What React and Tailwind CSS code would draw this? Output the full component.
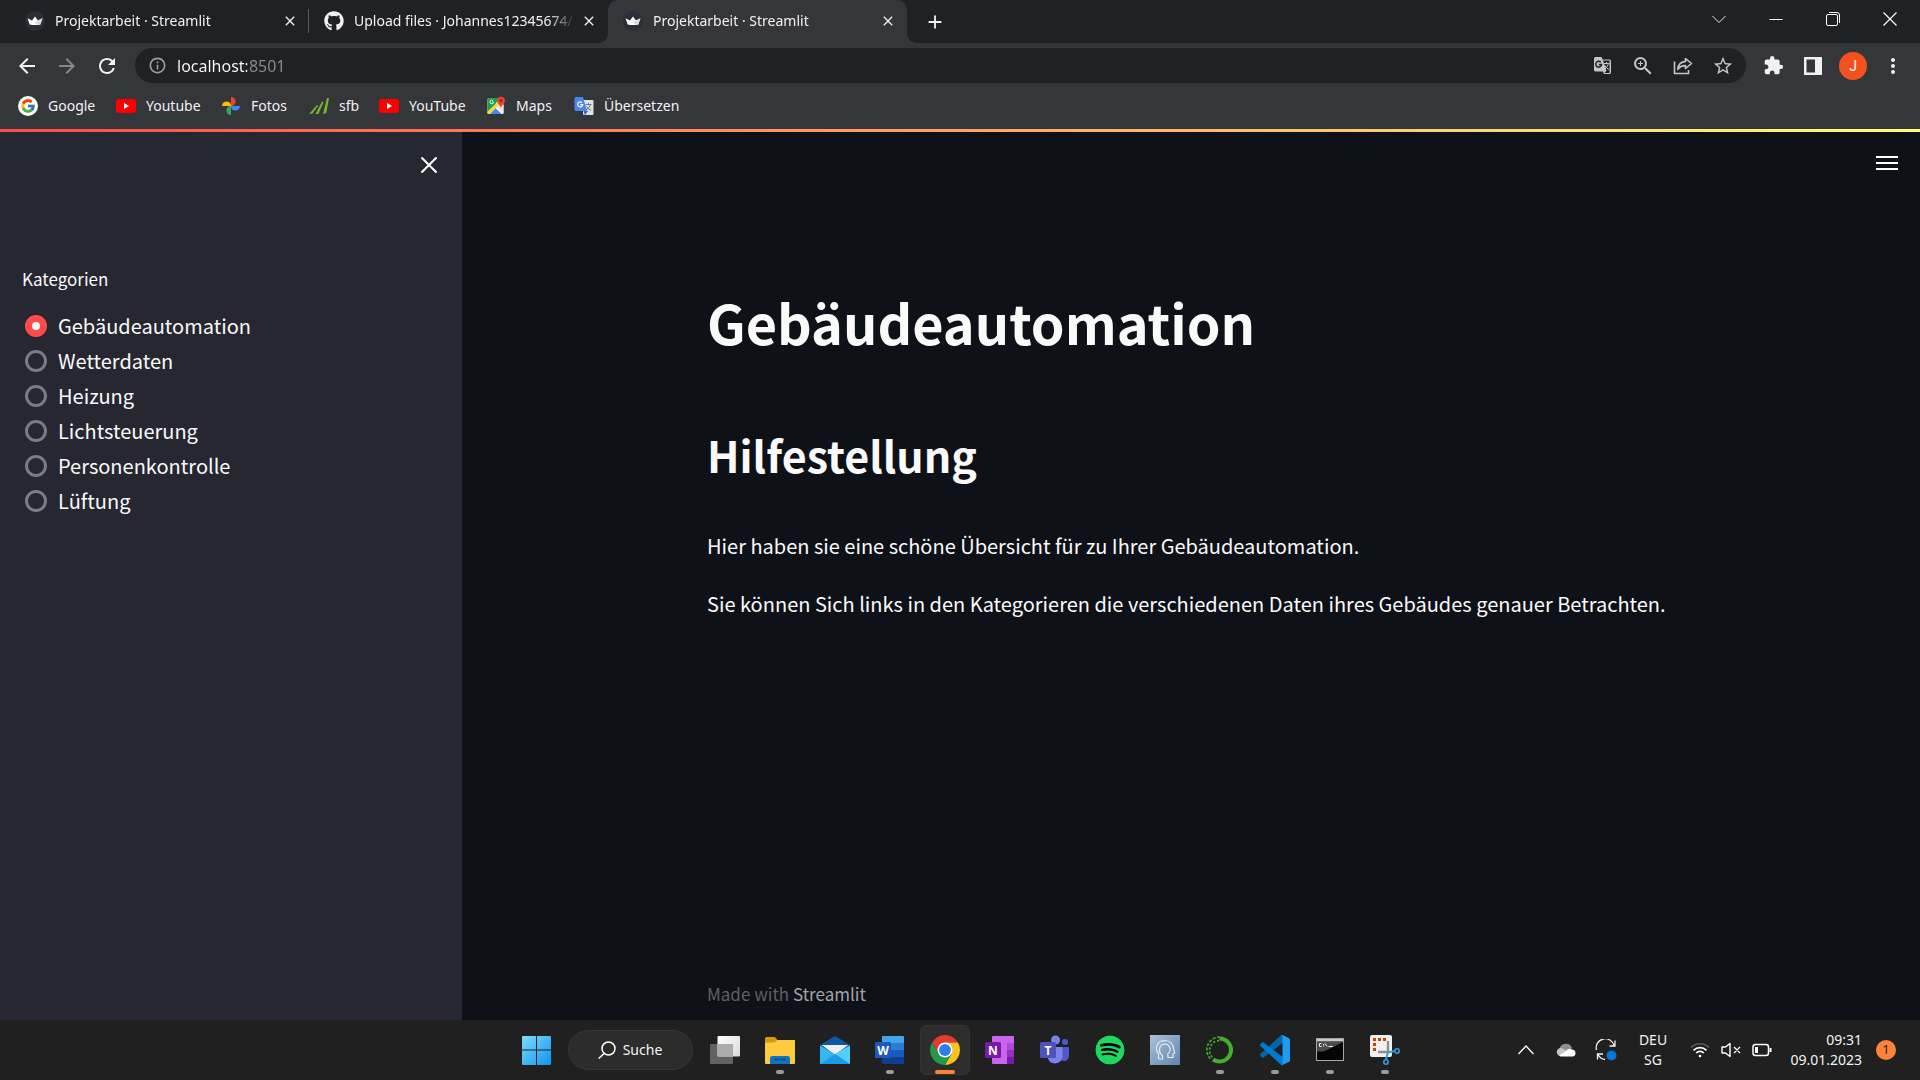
import React, { useState } from "react";
import { FaGithub, FaSpotify } from "react-icons/fa";
import { FcGoogle } from "react-icons/fc";
import {
  MdArrowBack,
  MdArrowForward,
  MdRefresh,
  MdInfoOutline,
  MdZoomIn,
  MdStarBorder,
  MdExtension,
  MdMoreVert,
  MdClose,
  MdAdd,
} from "react-icons/md";

/* ---------- Browser icons ---------- */

function Crown() {
  return (
    <svg viewBox="0 0 20 20" className="size-5 shrink-0">
      <circle cx="10" cy="10" r="10" fill="#2b2d38" />
      <path d="M2.500 7.300 7 9.600 10 5.600 13 9.600 17.500 7.300 15.300 13.400Q10 14.800 4.700 13.400Z" fill="#fff" />
      <path d="M10 11.200 13 9.600 17.500 7.300 15.300 13.400 12.400 14Z" fill="#d9dade" />
    </svg>
  );
}

function YouTubeIcon() {
  return (
    <svg viewBox="0 0 20 20" className="size-5 shrink-0">
      <rect x="0" y="3" width="20" height="14" rx="3" fill="#f00" />
      <path d="M8 7v6l5-3z" fill="#fff" />
    </svg>
  );
}

function GoogleIcon() {
  return (
    <span className="flex size-5 shrink-0 items-center justify-center rounded-full bg-white">
      <FcGoogle className="size-4" />
    </span>
  );
}

function PhotosIcon() {
  return (
    <svg viewBox="0 0 20 20" className="size-5 shrink-0">
      <path d="M10 1a4.600 4.600 0 0 1 0 9.200z" fill="#ea4335" />
      <path d="M19 10a4.600 4.600 0 0 1-9.200 0z" fill="#4285f4" />
      <path d="M10 19a4.600 4.600 0 0 1 0-9.200z" fill="#34a853" />
      <path d="M1 10a4.600 4.600 0 0 1 9.200 0z" fill="#fbbc04" />
    </svg>
  );
}

function SfbIcon() {
  return (
    <svg viewBox="0 0 20 20" className="size-5 shrink-0" fill="#76b82a">
      <path d="M0 18 8 9l1.400.6L3.400 17.400z" />
      <path d="M6.500 18 13 5.500l1.600.6L9.400 18z" />
      <path d="M14 18 18 2h2l-2.700 15z" />
    </svg>
  );
}

function MapsIcon() {
  return (
    <svg viewBox="0 0 20 20" className="size-5 shrink-0">
      <rect x="1.500" y="2" width="16" height="16" rx="1.500" fill="#fbfbfb" />
      <path d="M1.500 3.500A1.500 1.500 0 0 1 3 2h10L8.500 10 1.500 16z" fill="#1e9e58" />
      <path d="M1.500 15.500 12 5.500l2.200 2.300L4 18H3a1.500 1.500 0 0 1-1.500-1.500z" fill="#fdd835" />
      <path d="M4 18 9.700 12.200 15.500 18z" fill="#4285f4" />
      <path d="m11 11 6.500 6.500V9L14 8z" fill="#e3e5e8" />
      <path d="M7 4.700a1.800 1.800 0 1 0 .5 1.500H6" stroke="#fff" strokeWidth=".9" fill="none" />
      <path d="M15 .8a3.900 3.900 0 0 1 3.900 3.900c0 2.800-2.900 3.800-3.900 7.300-1-3.500-3.900-4.500-3.900-7.300A3.900 3.900 0 0 1 15 .8z" fill="#e5423a" />
      <circle cx="15" cy="4.600" r="1.400" fill="#8c1d18" />
    </svg>
  );
}

function TranslateIcon() {
  return (
    <svg viewBox="0 0 20 20" className="size-5 shrink-0">
      <rect x="9" y="4" width="10.500" height="15" rx="1" fill="#dfe1e5" />
      <path d="M11.500 8.500h6M14.500 7v1.500M16.300 8.500q-.8 4-4.300 5.500M12.500 10.500q1.500 3 4.500 3.700" stroke="#70757a" fill="none" />
      <path d="M2 1h7l4 14H2a1.500 1.500 0 0 1-1.500-1.500v-11A1.500 1.500 0 0 1 2 1z" fill="#4a86ee" />
      <path d="m9.500 15 1.500 4.200 3-4.200z" fill="#3367d6" />
      <path d="M8 6.600a2.500 2.500 0 1 0 .7 2H6.300" stroke="#fff" strokeWidth="1.200" fill="none" />
    </svg>
  );
}

function TranslateMono() {
  return (
    <svg viewBox="0 0 20 20" className="size-5" fill="none">
      <path d="M2.500 1h6l1 2.500h7A1.500 1.500 0 0 1 18 5v11.500a1.500 1.500 0 0 1-1.500 1.500H11l-1-2.500H2.500A1.500 1.500 0 0 1 1 14V2.500A1.500 1.500 0 0 1 2.500 1z" fill="#c4c5c8" />
      <path d="M10 4.500h6.500V17H11.500l2-2.500z" fill="#202124" />
      <path d="M10.500 7.500h6M13.500 6v1.500M15.500 7.500q-.7 3-3.300 5M11.500 9q1.300 2.700 4.300 4.500" stroke="#c4c5c8" />
      <path d="M7.800 6.200a2.900 2.900 0 1 0 .8 2.200H5.800" stroke="#202124" strokeWidth="1.500" />
    </svg>
  );
}

function ShareIcon() {
  return (
    <svg viewBox="0 0 20 20" className="size-5" fill="none" stroke="#c4c5c8" strokeWidth="1.600">
      <path d="M1.500 5.500v12h14V14" />
      <path d="M12.500 2.500 18.500 7.500l-6 5V9.600Q7.500 9.500 4.800 13.300 5.500 6 12.500 5.400z" strokeLinejoin="round" />
    </svg>
  );
}

function SidePanelIcon() {
  return (
    <svg viewBox="0 0 18 18" className="size-[18px]">
      <rect width="18" height="18" fill="#f1f1f4" />
      <rect x="2.500" y="2.500" width="8.500" height="13" fill="#35363a" />
    </svg>
  );
}

/* ---------- Taskbar icons ---------- */

function WindowsLogo() {
  return (
    <svg viewBox="0 0 30 30" className="size-[30px]">
      <defs>
        <linearGradient id="win" x1="0" y1="0" x2="1" y2="1" gradientUnits="objectBoundingBox">
          <stop offset="0" stopColor="#7fdcfb" />
          <stop offset="1" stopColor="#0e93ee" />
        </linearGradient>
      </defs>
      <path d="M2 1h13v13.500H1V2a1 1 0 0 1 1-1zM16 1h13a1 1 0 0 1 1 1v12.500H16zM1 15.500h14V30H2a1 1 0 0 1-1-1zM16 15.500h14V29a1 1 0 0 1-1 1H16z" fill="url(#win)" />
    </svg>
  );
}

function TaskViewIcon() {
  return (
    <svg viewBox="0 0 30 30" className="size-[30px]">
      <defs>
        <linearGradient id="tv" x1="0" y1="0" x2="1" y2="1">
          <stop offset="0" stopColor="#fff" />
          <stop offset="1" stopColor="#d9d9d9" />
        </linearGradient>
      </defs>
      <rect x="0" y="9" width="23" height="20" rx="1" fill="#626262" />
      <rect x="7.500" y="1" width="22.500" height="20.500" rx="1" fill="url(#tv)" />
      <path d="M7.500 9H23v12.500H7.500z" fill="#acacac" />
    </svg>
  );
}

function ExplorerIcon() {
  return (
    <svg viewBox="0 0 30 30" className="size-[30px]">
      <path d="M0 3.500A1.500 1.500 0 0 1 1.500 2h8.300L12.500 5H29a1 1 0 0 1 1 1v8H0z" fill="#d99a0b" />
      <path d="M0 7.500h9.500L12.500 5H29A1 1 0 0 1 30 6V28a1 1 0 0 1-1 1H1a1 1 0 0 1-1-1z" fill="#fdcb3f" />
      <path d="M5 29v-5.500A2.500 2.500 0 0 1 7.500 21h15a2.500 2.500 0 0 1 2.500 2.500V29z" fill="#0f74bd" />
      <path d="M9 24.500h12" stroke="#0a4f86" strokeWidth="1.500" />
    </svg>
  );
}

function MailIcon() {
  return (
    <svg viewBox="0 0 30 30" className="size-[30px]">
      <path d="M0 10 15 1l15 9v4H0z" fill="#0c59a4" />
      <path d="M2 10h26L15 20z" fill="#f3f3f3" />
      <path d="M0 10.500 15 19 30 10.500V29H0z" fill="#35b8f1" />
      <path d="M30 10.500V29L15 19z" fill="#50d0fb" />
      <path d="M0 29 15 19l15 10z" fill="#1c9be6" />
      <path d="M2 10h26l-13 9z" fill="#efefef" />
    </svg>
  );
}

function OfficeTile({ letter, back, front }) {
  return (
    <svg viewBox="0 0 30 30" className="size-[30px]">
      {back}
      <rect x="0" y="7" width="16" height="16" rx="1.500" fill={front} />
      <text x="8" y="19.500" textAnchor="middle" fontSize="12" fontWeight="700" fontFamily="Open Sans, sans-serif" fill="#fff">
        {letter}
      </text>
    </svg>
  );
}

const WordIcon = () => (
  <OfficeTile
    letter="W"
    front="#185abd"
    back={
      <g>
        <path d="M7 2a1 1 0 0 1 1-1h20a1 1 0 0 1 1 1v6H7z" fill="#41a5ee" />
        <path d="M7 8h22v7H7z" fill="#2b7cd3" />
        <path d="M7 15h22v7H7z" fill="#185abd" />
        <path d="M7 22h22v6a1 1 0 0 1-1 1H8a1 1 0 0 1-1-1z" fill="#103f91" />
      </g>
    }
  />
);

const OneNoteIcon = () => (
  <OfficeTile
    letter="N"
    front="#7719aa"
    back={
      <g>
        <rect x="7" y="1" width="22" height="28" rx="1" fill="#ca64ea" />
        <path d="M22 8h7v7h-7z" fill="#ae4bd5" />
        <path d="M22 15h7v7h-7z" fill="#9332bf" />
        <path d="M22 22h7v6a1 1 0 0 1-1 1h-6z" fill="#7719aa" />
      </g>
    }
  />
);

const TeamsIcon = () => (
  <OfficeTile
    letter="T"
    front="#4b53bc"
    back={
      <g>
        <circle cx="25" cy="7" r="3" fill="#5059c9" />
        <path d="M19 12h10v9a5 5 0 0 1-8 4z" fill="#5059c9" />
        <circle cx="15.500" cy="5" r="4.500" fill="#7b83eb" />
        <path d="M8 12h14.500v9.500a7.500 7.500 0 0 1-14.500 2z" fill="#7b83eb" />
      </g>
    }
  />
);

function ChromeIcon() {
  return (
    <svg viewBox="0 0 48 48" className="size-[30px]">
      <path d="M24 12h20.780A24 24 0 0 0 3.220 12l10.390 18z" fill="#e33b2e" />
      <path d="M34.390 30 24 48A24 24 0 0 0 44.780 12H24z" fill="#fcc31e" />
      <path d="M13.610 30 3.220 12A24 24 0 0 0 24 48l10.390-18z" fill="#249a49" />
      <circle cx="24" cy="24" r="12" fill="#fff" />
      <circle cx="24" cy="24" r="9.500" fill="#2f7de9" />
    </svg>
  );
}

function HeadIcon() {
  return (
    <svg viewBox="0 0 30 30" className="size-[30px]">
      <defs>
        <linearGradient id="head" x1="0" y1="0" x2="1" y2="1">
          <stop offset="0" stopColor="#a9c3da" />
          <stop offset="1" stopColor="#5f84aa" />
        </linearGradient>
      </defs>
      <rect width="30" height="30" fill="url(#head)" />
      <g fill="none" stroke="#e4edf5" strokeWidth="1.200">
        <path d="M8.500 24v-5.500C5 15 5.500 6 14.500 5.500c6 0 9 4 9 8.500l1.200 4-1.700.8v3.700h-5V20" />
        <path d="M8.500 24h4v-3.500c-4.500-3-4-11 2-11.500 6.500 0 7.500 8 2.500 10.500" />
      </g>
    </svg>
  );
}

function AnacondaIcon() {
  return (
    <svg viewBox="0 0 30 30" className="size-[30px]" fill="none">
      <path d="M14.500 3.500A11.500 11.500 0 1 1 8 24.500" stroke="#43b02a" strokeWidth="4" />
      <path d="M15 2A13 13 0 0 0 6 24.500" stroke="#43b02a" strokeWidth="1.600" strokeDasharray="3 1.500" />
      <path d="M14 5.500A10 10 0 0 0 8 23" stroke="#43b02a" strokeWidth="1.800" strokeDasharray="2 2" />
    </svg>
  );
}

function VsCodeIcon() {
  return (
    <svg viewBox="0 0 100 100" className="size-[30px]">
      <path d="M96.500 10.600 75.900.7a6.200 6.200 0 0 0-7.100 1.200L1.300 63.500a4.200 4.200 0 0 0 0 6.100l5.500 5a4.200 4.200 0 0 0 5.300.3L93.400 13.100A4.100 4.100 0 0 1 100 16.400v-.2a6.200 6.200 0 0 0-3.500-5.600z" fill="#0065a9" />
      <path d="m96.500 89.400-20.600 9.900a6.200 6.200 0 0 1-7.100-1.200L1.300 36.500a4.200 4.200 0 0 1 0-6.100l5.500-5a4.200 4.200 0 0 1 5.300-.3l81.300 61.800a4.100 4.100 0 0 0 6.600-3.300v.2a6.200 6.200 0 0 1-3.500 5.600z" fill="#007acc" />
      <path d="M75.900 99.300a6.200 6.200 0 0 1-7.100-1.200 3.700 3.700 0 0 0 6.200-2.600V4.500a3.700 3.700 0 0 0-6.200-2.600 6.200 6.200 0 0 1 7.100-1.200l20.600 9.900A6.200 6.200 0 0 1 100 16.200v67.600a6.200 6.200 0 0 1-3.500 5.600z" fill="#1f9cf0" />
    </svg>
  );
}

function TerminalIcon() {
  return (
    <svg viewBox="0 0 30 30" className="size-[30px]">
      <rect x="1.500" y="3.500" width="27" height="22" fill="#050505" stroke="#a5a5a5" />
      <path d="M2 4h26v2.500H2z" fill="#c9c9c9" />
      <path d="M2 7h26L9 16.500H2z" fill="#4b4b4b" />
      <path d="M6.500 8.500h-2v3h2M8.500 9v1M8.500 10.500v1M10 8.500l2 3M13.500 11.500h4.500" stroke="#f2f2f2" fill="none" />
    </svg>
  );
}

function SnipIcon() {
  return (
    <svg viewBox="0 0 30 30" className="size-[30px]">
      <rect x="0" y="0" width="22" height="22" rx="2" fill="#f0f0f0" />
      <path d="M3 3h3v3H3zM8 3h3v3H8zM13 3h3v3h-3zM3 8h3v3H3zM3 13h3v3H3z" fill="#d83b01" />
      <path d="M18 6v12M8 17h11" stroke="#8f8f8f" strokeWidth="2.400" fill="none" />
      <path d="m18 17-2 7.500M17.500 17.500 25 16" stroke="#2b9fe0" strokeWidth="2" />
      <circle cx="16" cy="27" r="2.200" fill="none" stroke="#2b9fe0" strokeWidth="1.600" />
      <circle cx="27" cy="16" r="2.200" fill="none" stroke="#2b9fe0" strokeWidth="1.600" />
    </svg>
  );
}

/* ---------- Data ---------- */

const tabs = [
  { title: "Projektarbeit · Streamlit", icon: <Crown /> },
  { title: "Upload files · Johannes12345674/", icon: <FaGithub className="size-5 shrink-0" /> },
  { title: "Projektarbeit · Streamlit", icon: <Crown />, active: true },
];

const bookmarks = [
  { label: "Google", icon: <GoogleIcon />, width: "w-[98px]" },
  { label: "Youtube", icon: <YouTubeIcon />, width: "w-[105px]" },
  { label: "Fotos", icon: <PhotosIcon />, width: "w-[88px]" },
  { label: "sfb", icon: <SfbIcon />, width: "w-[70px]" },
  { label: "YouTube", icon: <YouTubeIcon />, width: "w-[107px]" },
  { label: "Maps", icon: <MapsIcon />, width: "w-[88px]" },
  { label: "Übersetzen", icon: <TranslateIcon />, width: "w-[120px]" },
];

const categories = ["Gebäudeautomation", "Wetterdaten", "Heizung", "Lichtsteuerung", "Personenkontrolle", "Lüftung"];

const apps = [
  { name: "Aktive Anwendungen", icon: <TaskViewIcon /> },
  { name: "Explorer", icon: <ExplorerIcon />, running: true },
  { name: "Mail", icon: <MailIcon /> },
  { name: "Word", icon: <WordIcon />, running: true },
  { name: "Chrome", icon: <ChromeIcon />, active: true },
  { name: "OneNote", icon: <OneNoteIcon /> },
  { name: "Teams", icon: <TeamsIcon /> },
  {
    name: "Spotify",
    icon: (
      <span className="flex rounded-full bg-black">
        <FaSpotify className="size-[30px] text-[#1ed760]" />
      </span>
    ),
  },
  { name: "Profil", icon: <HeadIcon /> },
  { name: "Anaconda", icon: <AnacondaIcon />, running: true },
  { name: "Visual Studio Code", icon: <VsCodeIcon />, running: true },
  { name: "Eingabeaufforderung", icon: <TerminalIcon />, running: true },
  { name: "Snipping Tool", icon: <SnipIcon />, running: true },
];

/* ---------- Browser chrome ---------- */

function Tab({ tab, divider }) {
  return (
    <div
      className={
        tab.active
          ? "relative flex h-full w-[299px] items-center rounded-t-[10px] bg-[#35363a] pr-[9px] pb-0.5 pl-[15px]"
          : "relative flex h-full w-[299px] items-center pr-[9px] pb-0.5 pl-[15px]"
      }
    >
      {tab.active && (
        <>
          <span className="absolute bottom-0 -left-2.5 size-2.5 bg-[radial-gradient(circle_at_0_0,transparent_10px,#35363a_10px)]" />
          <span className="absolute -right-2.5 bottom-0 size-2.5 bg-[radial-gradient(circle_at_100%_0,transparent_10px,#35363a_10px)]" />
        </>
      )}
      {tab.icon}
      <span className="ml-2.5 min-w-0 flex-1 whitespace-nowrap [mask-image:linear-gradient(to_right,#000_88%,transparent)]">
        {tab.title}
      </span>
      <button aria-label="Tab schließen" className="ml-1 flex size-5 items-center justify-center">
        <MdClose className="size-4" />
      </button>
      {divider && <span className="absolute right-0 h-6 w-px bg-[#5a5b5f]" />}
    </div>
  );
}

function TabStrip() {
  return (
    <div className="flex h-[43px] items-center justify-between bg-[#202124] text-sm text-[#f1f1f3]">
      <div className="flex h-full items-center pl-2.5">
        {tabs.map((tab, i) => (
          <Tab key={i} tab={tab} divider={i === 0} />
        ))}
        <button aria-label="Neuer Tab" className="ml-4 flex size-6 items-center justify-center">
          <MdAdd className="size-[22px]" />
        </button>
      </div>
      <div className="flex h-[37px] items-center self-start pr-0.5">
        <button aria-label="Tabs durchsuchen" className="flex w-[57px] justify-center">
          <svg viewBox="0 0 14 14" className="size-3.5" fill="none" stroke="#e8e8ea"><path d="m.5 4 6.500 6.500L13.500 4" /></svg>
        </button>
        <button aria-label="Minimieren" className="flex w-[57px] justify-center">
          <svg viewBox="0 0 14 14" className="size-3.5" fill="none" stroke="#fff"><path d="M.5 7.500h13" /></svg>
        </button>
        <button aria-label="Verkleinern" className="flex w-[57px] justify-center">
          <svg viewBox="0 0 14 14" className="size-3.5" fill="none" stroke="#fff">
            <rect x=".5" y="2.500" width="11" height="11" rx="1.500" />
            <path d="M3 .5h8A2.500 2.500 0 0 1 13.500 3v8" />
          </svg>
        </button>
        <button aria-label="Schließen" className="flex w-[57px] justify-center">
          <svg viewBox="0 0 14 14" className="size-3.5" fill="none" stroke="#fff" strokeWidth="1.200"><path d="m.5.5 13 13m0-13-13 13" /></svg>
        </button>
      </div>
    </div>
  );
}

function Toolbar() {
  return (
    <div className="flex items-center bg-[#35363a] pt-[5px] pl-[7px] pr-[7px] text-[#f1f1f4]">
      <button aria-label="Zurück" className="flex w-10 justify-center"><MdArrowBack className="size-6" /></button>
      <button aria-label="Vorwärts" className="flex w-10 justify-center text-[#86878b]"><MdArrowForward className="size-6" /></button>
      <button aria-label="Neu laden" className="flex w-10 justify-center"><MdRefresh className="size-6" /></button>
      <div className="ml-2 flex h-[35px] flex-1 items-center rounded-full bg-[#202124] pr-[3px] pl-[13px] text-[#c4c5c8]">
        <MdInfoOutline className="size-[19px] text-[#9aa0a6]" />
        <input
          aria-label="Adresse"
          defaultValue="localhost:8501"
          className="ml-2.5 h-full min-w-0 flex-1 bg-[linear-gradient(to_right,#fff_70px,#8b8c90_70px)] bg-clip-text text-base text-transparent caret-white outline-none"
        />
        <button aria-label="Seite übersetzen" className="flex w-10 justify-center"><TranslateMono /></button>
        <button aria-label="Zoom" className="flex w-10 justify-center"><MdZoomIn className="size-6" /></button>
        <button aria-label="Teilen" className="flex w-10 justify-center"><ShareIcon /></button>
        <button aria-label="Lesezeichen" className="flex w-10 justify-center"><MdStarBorder className="size-[22px]" /></button>
      </div>
      <div className="flex items-center pl-[7px]">
        <button aria-label="Erweiterungen" className="flex w-10 justify-center"><MdExtension className="size-[21px]" /></button>
        <button aria-label="Seitenleiste" className="flex w-10 justify-center"><SidePanelIcon /></button>
        <button aria-label="Profil" className="mx-[6px] flex size-7 items-center justify-center rounded-full bg-[#f4511e] font-[Roboto] text-sm text-white">J</button>
        <button aria-label="Menü" className="flex w-10 justify-center"><MdMoreVert className="size-6" /></button>
      </div>
    </div>
  );
}

function BookmarkBar() {
  return (
    <nav className="flex h-[46px] items-center bg-[#35363a] pl-[18px] text-sm text-[#f1f1f3]">
      {bookmarks.map((b, i) => (
        <a key={i} href="#" className={`flex items-center gap-2.5 whitespace-nowrap ${b.width}`}>
          {b.icon}
          {b.label}
        </a>
      ))}
    </nav>
  );
}

/* ---------- Page ---------- */

function Sidebar() {
  const [selected, setSelected] = useState(categories[0]);
  return (
    <aside className="w-[462px] shrink-0 bg-[#262730] text-[#fafafa]">
      <div className="flex justify-end pt-[22px] pr-[22px]">
        <button aria-label="Seitenleiste schließen">
          <svg viewBox="0 0 22 22" className="size-[22px]" fill="none" stroke="#fff" strokeWidth="2" strokeLinecap="round"><path d="m4 4 14 14m0-14L4 18" /></svg>
        </button>
      </div>
      <fieldset className="mt-[91px] px-[22px]">
        <legend className="text-[17px] leading-6">Kategorien</legend>
        <div className="mt-[17px] flex flex-col">
          {categories.map((c) => (
            <label key={c} className="flex h-[35px] items-center gap-[11px] pl-[3px] text-xl">
              <input
                type="radio"
                name="category"
                checked={selected === c}
                onChange={() => setSelected(c)}
                className="size-[22px] appearance-none rounded-full border-[3px] border-[#7b7c85] checked:border-[7px] checked:border-[#ff4b4b] checked:bg-[#fafafa]"
              />
              {c}
            </label>
          ))}
        </div>
      </fieldset>
    </aside>
  );
}

function Page() {
  return (
    <div className="flex min-h-0 flex-1 bg-[#0e1117] font-['Noto_Sans_CJK_SC','Noto_Sans',sans-serif]">
      <Sidebar />
      <div className="relative flex min-w-0 flex-1 flex-col">
        <button aria-label="Hauptmenü" className="absolute top-5 right-[22px]">
          <svg viewBox="0 0 22 22" className="size-[22px]" fill="#fff"><path d="M0 4h22v2H0zM0 10h22v2H0zM0 16h22v2H0z" /></svg>
        </button>
        <main className="mx-auto flex w-full max-w-[968px] flex-1 flex-col text-[#fafafa]">
          <h1 className="mt-[154px] text-[54px] leading-[72px] font-bold">Gebäudeautomation</h1>
          <h2 className="mt-[66px] text-[43px] leading-[60px] font-semibold">Hilfestellung</h2>
          <p className="mt-[46px] text-xl leading-8">Hier haben sie eine schöne Übersicht für zu Ihrer Gebäudeautomation.</p>
          <p className="mt-[26px] text-xl leading-8">Sie können Sich links in den Kategorieren die verschiedenen Daten ihres Gebäudes genauer Betrachten.</p>
          <footer className="mt-auto pb-3.5 text-[17px] leading-6 text-[#5e6066]">
            Made with <a href="#" className="text-[#a3a4a8]">Streamlit</a>
          </footer>
        </main>
      </div>
    </div>
  );
}

/* ---------- Taskbar ---------- */

function Taskbar() {
  return (
    <footer className="grid h-[60px] shrink-0 grid-cols-[1fr_auto_1fr] items-center bg-[#202020] text-[#f3f3f3]">
      <div />
      <div className="flex items-center gap-[5px]">
        <button aria-label="Start" className="flex size-[50px] items-center justify-center"><WindowsLogo /></button>
        <button className="mx-0.5 flex h-10 w-[125px] items-center justify-center gap-[7px] rounded-full border border-[#353535] bg-[#2c2c2c] text-sm">
          <svg viewBox="0 0 18 18" className="size-[18px]" fill="none" stroke="#fff" strokeWidth="1.500"><circle cx="10.500" cy="7.500" r="6.500" /><path d="M6 12.500.7 17.500" /></svg>
          Suche
        </button>
        {apps.map((a) => (
          <button
            key={a.name}
            aria-label={a.name}
            className={
              a.active
                ? "relative flex size-[50px] items-center justify-center rounded-md border border-[#333] bg-[#2d2d2d]"
                : "relative flex size-[50px] items-center justify-center"
            }
          >
            {a.icon}
            {a.running && <span className="absolute bottom-px h-1 w-2 rounded-full bg-[#9a9a9a]" />}
            {a.active && <span className="absolute bottom-0 h-1 w-5 rounded-full bg-[#f7823b]" />}
          </button>
        ))}
      </div>
      <div className="flex items-center justify-end pr-6">
        <button aria-label="Ausgeblendete Symbole" className="flex w-10 justify-center">
          <svg viewBox="0 0 18 18" className="size-[18px]" fill="none" stroke="#fff" strokeWidth="1.300"><path d="m1.500 13 7.500-8 7.500 8" /></svg>
        </button>
        <button aria-label="OneDrive" className="flex w-10 justify-center">
          <svg viewBox="0 0 20 20" className="size-5">
            <path d="M3.500 9a6.500 6.500 0 0 1 12.500-1L12 13H3z" fill="#8f8f8f" />
            <path d="M4.500 16a4 4 0 1 1 1.500-7.800L17 14z" fill="#c4c4c4" />
            <path d="M3 15.500 10 11q3-3.300 5.500-1.500a3.600 3.600 0 0 1 1.500 7H5q-1.200 0-2-1z" fill="#fff" />
          </svg>
        </button>
        <button aria-label="Windows Update" className="flex w-10 justify-center">
          <svg viewBox="0 0 22 22" className="size-[22px]" fill="none" stroke="#f0f0f0" strokeWidth="1.300">
            <path d="M1.500 11A9 9 0 0 1 19 6.500M20 1.500v5.500h-5.500M2.500 20.500V15H8M3 15.500a9 9 0 0 0 7 5" />
            <circle cx="16.500" cy="16.500" r="5" fill="#0078d4" stroke="none" />
          </svg>
        </button>
        <button className="w-[54px] text-center text-sm leading-5">DEU<br />SG</button>
        <button aria-label="Netzwerk, Lautstärke, Akku" className="ml-1 flex items-center gap-[11px] pl-1.5">
          <svg viewBox="0 0 20 20" className="size-5" fill="none" stroke="#fff" strokeWidth="1.700">
            <path d="M1 7.500a12.700 12.700 0 0 1 18 0" stroke="#5a5a5a" />
            <path d="M3.500 10.300a9.200 9.200 0 0 1 13 0M6.200 13a5.400 5.400 0 0 1 7.600 0" />
            <circle cx="10" cy="16" r="1.300" fill="#fff" stroke="none" />
          </svg>
          <svg viewBox="0 0 20 20" className="size-5" fill="none" stroke="#fff" strokeWidth="1.400" strokeLinejoin="round">
            <path d="M1 7h3.500L9 3.500v13L4.500 13H1zM13 7l6 6m0-6-6 6" />
          </svg>
          <svg viewBox="0 0 20 20" className="size-5" fill="none" stroke="#fff" strokeWidth="1.500">
            <rect x="1" y="4.500" width="15.500" height="11" rx="2.500" />
            <path d="M18.500 8v4" strokeWidth="2" />
            <path d="M3 7h3v6H3z" fill="#fff" stroke="none" />
          </svg>
        </button>
        <button className="w-[90px] text-right text-sm leading-5">09:31<br />09.01.2023</button>
        <button aria-label="1 Benachrichtigung" className="ml-[14px] flex size-5 items-center justify-center rounded-full bg-[#ff8239] text-xs text-[#202020]">1</button>
      </div>
    </footer>
  );
}

export default function App() {
  return (
    <div className="flex h-screen flex-col overflow-hidden bg-[#0e1117] font-['Noto_Sans','Open_Sans',sans-serif]">
      <TabStrip />
      <Toolbar />
      <BookmarkBar />
      <div className="h-[3px] shrink-0 bg-[linear-gradient(to_right,#ff4b4b,#fffd80)]" />
      <Page />
      <Taskbar />
    </div>
  );
}
